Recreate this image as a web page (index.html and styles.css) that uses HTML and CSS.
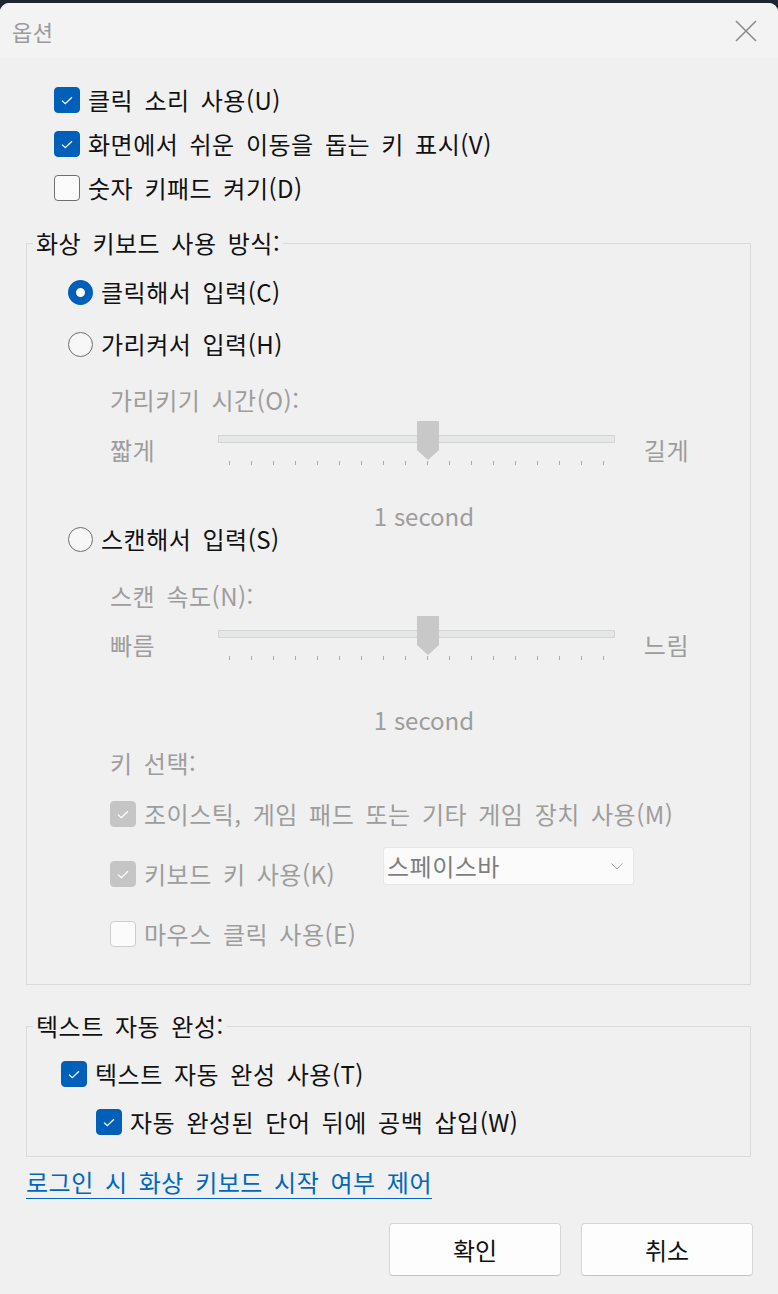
FILE: index.html
```html
<!DOCTYPE html>
<html lang="ko">
<head>
  <meta charset="UTF-8" />
  <title>옵션</title>
  <link rel="stylesheet" href="styles.css">
</head>
<body>
  <div class="window">
    <div class="titlebar">
      <span class="title">옵션</span>
      <svg class="close" width="22" height="22" viewBox="0 0 22 22">
        <path d="M1 1 L21 21 M21 1 L1 21" stroke="#8c8c8c" stroke-width="1.6" fill="none"/>
      </svg>
    </div>

    <div class="content">
      <div class="top-checks">
        <label class="check on">
          <span class="box"><svg width="12" height="9" viewBox="0 0 12 9"><polyline points="1,4.6 4.3,7.7 11,1.2" fill="none" stroke="#fff" stroke-width="1.3"/></svg></span>
          <span>클릭 소리 사용(U)</span>
        </label>
        <label class="check on">
          <span class="box"><svg width="12" height="9" viewBox="0 0 12 9"><polyline points="1,4.6 4.3,7.7 11,1.2" fill="none" stroke="#fff" stroke-width="1.3"/></svg></span>
          <span>화면에서 쉬운 이동을 돕는 키 표시(V)</span>
        </label>
        <label class="check">
          <span class="box"></span>
          <span>숫자 키패드 켜기(D)</span>
        </label>
      </div>

      <fieldset class="group mode">
        <legend>화상 키보드 사용 방식:</legend>
        <div class="group-body">
          <label class="radio on r1"><span class="dot"></span><span>클릭해서 입력(C)</span></label>
          <label class="radio r2"><span class="dot"></span><span>가리켜서 입력(H)</span></label>

          <div class="sub">
            <div class="hover-label">가리키기 시간(O):</div>
            <div class="slider s1">
              <span class="end">짧게</span>
              <div class="rail">
                <div class="track"></div>
                <svg class="thumb" width="22" height="39" viewBox="0 0 22 39"><polygon points="0,0 22,0 22,29 11,39 0,29" fill="#c8c8c8"/></svg>
                <div class="ticks"><i></i><i></i><i></i><i></i><i></i><i></i><i></i><i></i><i></i><i></i><i></i><i></i><i></i><i></i><i></i><i></i><i></i><i></i></div>
              </div>
              <span class="end right">길게</span>
            </div>
            <div class="secs secs1">1 second</div>
          </div>

          <label class="radio r3"><span class="dot"></span><span>스캔해서 입력(S)</span></label>

          <div class="sub">
            <div class="scan-label">스캔 속도(N):</div>
            <div class="slider s2">
              <span class="end">빠름</span>
              <div class="rail">
                <div class="track"></div>
                <svg class="thumb" width="22" height="39" viewBox="0 0 22 39"><polygon points="0,0 22,0 22,29 11,39 0,29" fill="#c8c8c8"/></svg>
                <div class="ticks"><i></i><i></i><i></i><i></i><i></i><i></i><i></i><i></i><i></i><i></i><i></i><i></i><i></i><i></i><i></i><i></i><i></i><i></i></div>
              </div>
              <span class="end right">느림</span>
            </div>
            <div class="secs secs2">1 second</div>

            <div class="key-label">키 선택:</div>

            <label class="check dim row-m">
              <span class="box"><svg width="12" height="9" viewBox="0 0 12 9"><polyline points="1,4.6 4.3,7.7 11,1.2" fill="none" stroke="#fff" stroke-width="1.3"/></svg></span>
              <span>조이스틱, 게임 패드 또는 기타 게임 장치 사용(M)</span>
            </label>

            <div class="row-k">
              <label class="check dim">
                <span class="box"><svg width="12" height="9" viewBox="0 0 12 9"><polyline points="1,4.6 4.3,7.7 11,1.2" fill="none" stroke="#fff" stroke-width="1.3"/></svg></span>
                <span>키보드 키 사용(K)</span>
              </label>
              <div class="select">
                <span>스페이스바</span>
                <svg width="12" height="7" viewBox="0 0 12 7"><polyline points="0.5,0.5 6,6 11.5,0.5" fill="none" stroke="#a8a8a8" stroke-width="1"/></svg>
              </div>
            </div>

            <label class="check dim off row-e">
              <span class="box"></span>
              <span>마우스 클릭 사용(E)</span>
            </label>
          </div>
        </div>
      </fieldset>

      <fieldset class="group auto">
        <legend>텍스트 자동 완성:</legend>
        <div class="group-body">
          <label class="check on row-t">
            <span class="box"><svg width="12" height="9" viewBox="0 0 12 9"><polyline points="1,4.6 4.3,7.7 11,1.2" fill="none" stroke="#fff" stroke-width="1.3"/></svg></span>
            <span>텍스트 자동 완성 사용(T)</span>
          </label>
          <label class="check on row-w">
            <span class="box"><svg width="12" height="9" viewBox="0 0 12 9"><polyline points="1,4.6 4.3,7.7 11,1.2" fill="none" stroke="#fff" stroke-width="1.3"/></svg></span>
            <span>자동 완성된 단어 뒤에 공백 삽입(W)</span>
          </label>
        </div>
      </fieldset>

      <a class="link" href="#">로그인 시 화상 키보드 시작 여부 제어</a>

      <div class="actions">
        <button class="btn">확인</button>
        <button class="btn">취소</button>
      </div>
    </div>
  </div>
</body>
</html>
```

FILE: styles.css
```css
* {
  box-sizing: border-box;
}

body {
  margin: 0;
  background: #1d2532;
  font-family: "Noto Sans CJK KR", "Noto Sans", sans-serif;
  font-size: 24px;
  line-height: 24px;
  letter-spacing: 0.5px;
  word-spacing: 4px;
  color: #111;
}

.window {
  margin-top: 3px;
  height: 1291px;
  background: #f0f0f0;
  border-radius: 9px 9px 0 0;
  overflow: hidden;
}

.titlebar {
  height: 55px;
  background: #f3f3f3;
  display: flex;
  align-items: center;
  justify-content: space-between;
  padding: 0 21px 0 12px;
}

.title {
  font-size: 22px;
  color: #9b9b9b;
}

.content {
  padding: 29px 27px 0 26px;
}

/* checkboxes */

.check {
  display: flex;
  align-items: center;
  gap: 8px;
  height: 26px;
}

.box {
  width: 26px;
  height: 26px;
  flex: none;
  border: 1px solid #6f6f6f;
  border-radius: 4px;
  background: #fbfbfb;
  display: flex;
  align-items: center;
  justify-content: center;
}

.check.on .box {
  background: #005fb8;
  border-color: #005fb8;
}

.check.dim {
  color: #9d9d9d;
}

.check.dim .box {
  background: #c5c5c5;
  border-color: #c5c5c5;
}

.check.dim.off .box {
  background: #fbfbfb;
  border-color: #cdcdcd;
}

.top-checks {
  display: flex;
  flex-direction: column;
  gap: 18px;
  margin-left: 28px;
}

/* radios */

.radio {
  display: flex;
  align-items: center;
  gap: 8px;
  height: 26px;
}

.dot {
  width: 25px;
  height: 25px;
  flex: none;
  border-radius: 50%;
  border: 1px solid #6f6f6f;
  background: #f7f7f7;
}

.radio.on .dot {
  border: 8px solid #005fb8;
  background: #fff;
}

/* group boxes */

.group {
  margin: 0;
  padding: 0;
  border: 1px solid #dadada;
}

.group legend {
  margin-left: 6px;
  padding: 0 3px;
  line-height: 24px;
}

.mode {
  margin-top: 30px;
}

.mode .group-body {
  padding: 0 0 37px 41px;
}

.r1 { margin-top: 24px; }
.r2 { margin-top: 26px; }
.r3 { margin-top: 0; }

.sub {
  margin-left: 42px;
  color: #9d9d9d;
}

.hover-label { margin-top: 31px; }
.scan-label { margin-top: 32px; }
.key-label { margin-top: 21px; }

/* sliders */

.slider {
  display: grid;
  grid-template-columns: 108px 397px 74px;
  height: 48px;
}

.s1 { margin-top: 9px; }
.s2 { margin-top: 8px; }

.end {
  margin-top: 17px;
}

.end.right {
  text-align: right;
}

.rail {
  position: relative;
}

.track {
  margin-top: 14px;
  height: 8px;
  background: #e6e8e8;
  border: 1px solid #d4d4d4;
}

.thumb {
  position: absolute;
  left: 199px;
  top: 0;
}

.ticks {
  display: flex;
  justify-content: space-between;
  margin-top: 18px;
  padding: 0 11px;
}

.ticks i {
  width: 1px;
  height: 4px;
  background: #ababab;
}

.secs {
  width: 397px;
  margin-left: 108px;
  padding-left: 15px;
  text-align: center;
  line-height: 20px;
  letter-spacing: 0;
  word-spacing: 0;
}

.secs1 { margin-top: 37px; }
.secs2 { margin-top: 46px; }

.row-m { margin-top: 26px; }

.row-k {
  display: grid;
  grid-template-columns: 273px 251px;
  align-items: start;
  margin-top: 20px;
}

.row-k .check {
  margin-top: 14px;
}

.select {
  height: 38px;
  background: #fbfbfb;
  border: 1px solid #e6e6e6;
  border-radius: 3px;
  display: flex;
  align-items: center;
  justify-content: space-between;
  padding: 0 10px 0 3px;
  color: #7e7e7e;
}

.row-e { margin-top: 34px; }

/* text completion */

.auto {
  margin-top: 29px;
}

.auto .group-body {
  padding: 0 0 21px 34px;
}

.row-t { margin-top: 23px; }

.row-w {
  margin-top: 22px;
  margin-left: 35px;
}

.link {
  display: inline-block;
  margin-top: 13px;
  color: #0067c0;
  text-decoration: underline;
  text-decoration-thickness: 1px;
  text-underline-offset: 6px;
}

.actions {
  display: flex;
  justify-content: flex-end;
  gap: 20px;
  margin-top: 29px;
  margin-right: -2px;
}

.btn {
  width: 172px;
  height: 53px;
  background: #fdfdfd;
  border: 1px solid #d6d6d6;
  border-bottom-color: #c4c4c4;
  border-radius: 4px;
  font: inherit;
  font-size: 24px;
  color: #111;
}
```
